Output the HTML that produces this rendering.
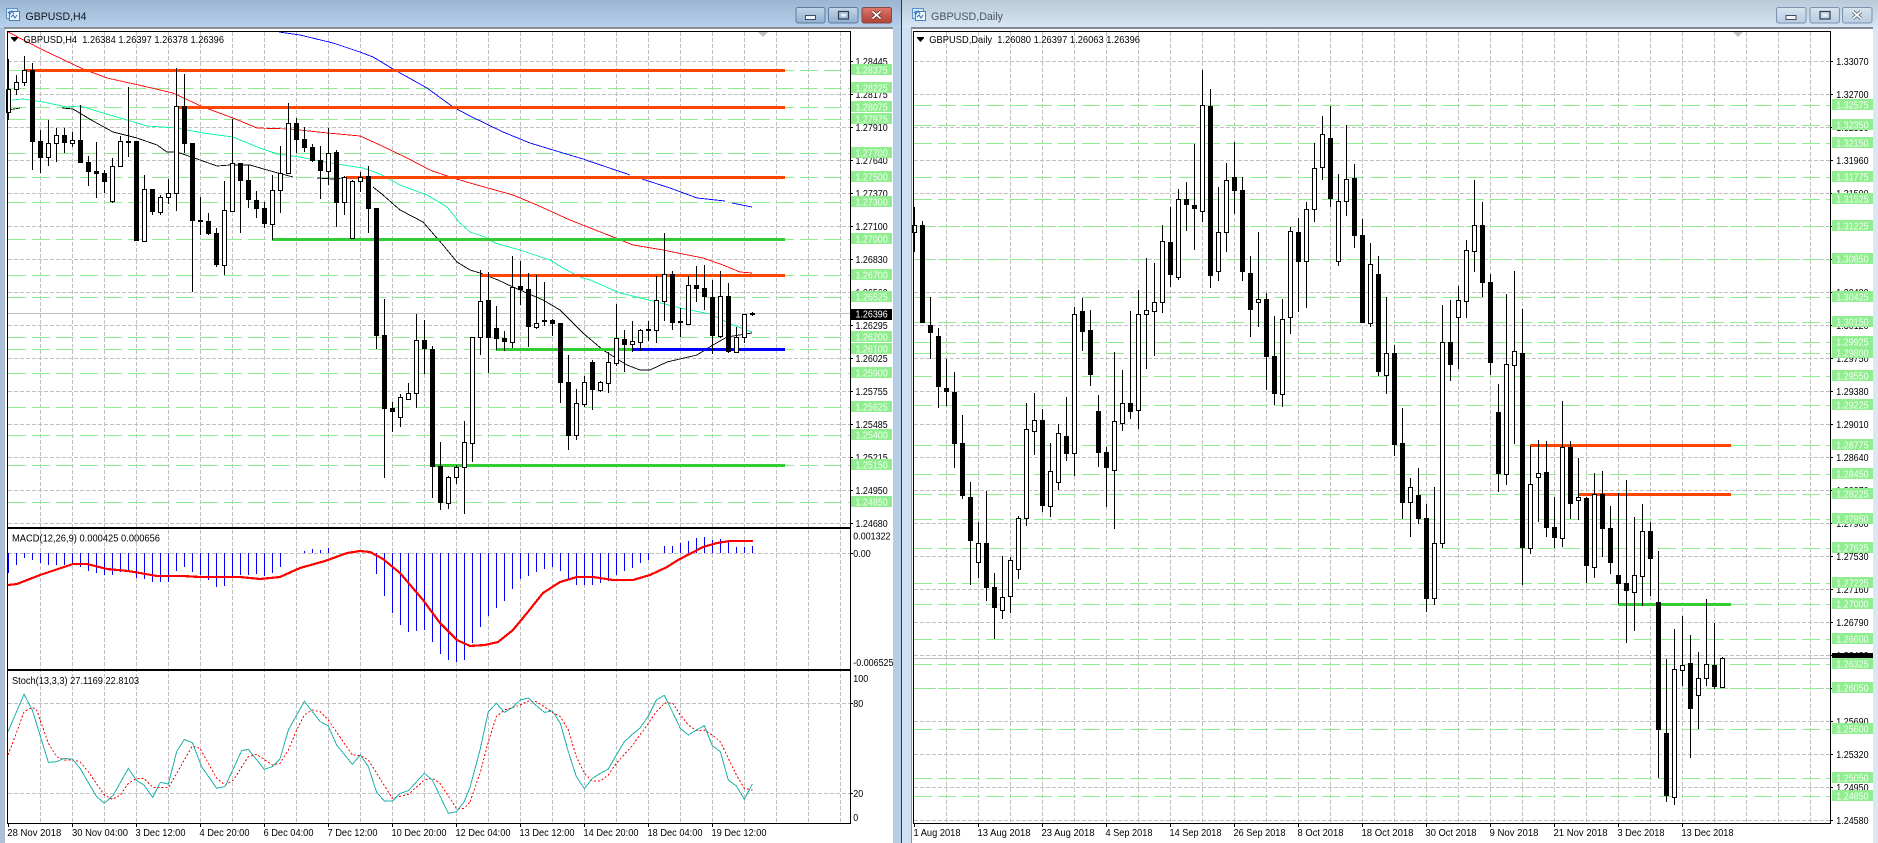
<!DOCTYPE html>
<html><head><meta charset="utf-8"><title>GBPUSD</title>
<style>
html,body{margin:0;padding:0;background:#fff;width:1878px;height:843px;overflow:hidden}
svg{display:block}
text{font-family:"Liberation Sans",sans-serif;font-size:10.5px;fill:#000;white-space:pre}
.c{shape-rendering:crispEdges;fill:none}
.lb text{fill:#f2fff2}
</style></head><body>
<svg width="1878" height="843" viewBox="0 0 1878 843" xmlns="http://www.w3.org/2000/svg">
<defs>
<linearGradient id="t1" x1="0" y1="0" x2="0" y2="1"><stop offset="0" stop-color="#9bb4d0"/><stop offset="1" stop-color="#b7d2ec"/></linearGradient>
<linearGradient id="t2" x1="0" y1="0" x2="0" y2="1"><stop offset="0" stop-color="#bac9d8"/><stop offset="1" stop-color="#d7e7f5"/></linearGradient>
<linearGradient id="b1" x1="0" y1="0" x2="0" y2="1"><stop offset="0" stop-color="#c3d6e9"/><stop offset=".5" stop-color="#a9c2dc"/><stop offset="1" stop-color="#8fb0d2"/></linearGradient>
<linearGradient id="b2" x1="0" y1="0" x2="0" y2="1"><stop offset="0" stop-color="#e0786c"/><stop offset=".5" stop-color="#c75a4e"/><stop offset="1" stop-color="#b04236"/></linearGradient>
<linearGradient id="b3" x1="0" y1="0" x2="0" y2="1"><stop offset="0" stop-color="#d9e5f0"/><stop offset=".5" stop-color="#c6d7e7"/><stop offset="1" stop-color="#b8cee3"/></linearGradient>
</defs>
<rect width="1878" height="843" fill="#fff"/>
<!-- window chrome -->
<rect x="0" y="28" width="4.5" height="815" fill="#a9c1dc"/>
<rect x="893" y="28" width="8" height="815" fill="#b5cfe9"/>
<rect x="902" y="28" width="9" height="815" fill="#d0e2f1"/>
<rect x="1873" y="28" width="5" height="815" fill="#dbe8f4"/>
<rect x="0" y="0" width="901" height="28" fill="url(#t1)"/>
<rect x="902" y="0" width="976" height="28" fill="url(#t2)"/>
<rect x="901" y="0" width="1" height="843" fill="#0f4656"/>
<rect x="4" y="27" width="889" height="2" fill="#8b9096"/>
<rect x="911" y="27" width="962" height="2" fill="#858a90"/>
<rect x="4" y="29" width="1" height="814" fill="#8b9096" opacity=".5"/>
<rect x="911" y="29" width="1" height="814" fill="#8f9296"/>
<!-- icons -->
<g id="ic"><rect x="6.5" y="8.5" width="11" height="10" fill="#d5e6f7" stroke="#5b93cf"/><rect x="9.5" y="11.5" width="10" height="9" fill="#eef6fd" stroke="#3f7fc4"/><path d="M8 12l2 2 2-3 2 3M11 17l2-2 2 3 2-3" fill="none" stroke="#2f6cb5"/></g>
<g transform="translate(906,0)"><rect x="6.5" y="8.5" width="11" height="10" fill="#d5e6f7" stroke="#5b93cf"/><rect x="9.5" y="11.5" width="10" height="9" fill="#eef6fd" stroke="#3f7fc4"/><path d="M8 12l2 2 2-3 2 3M11 17l2-2 2 3 2-3" fill="none" stroke="#2f6cb5"/></g>
<text x="25.5" y="20" textLength="61" lengthAdjust="spacingAndGlyphs" style="font-size:11px;fill:#10141a">GBPUSD,H4</text>
<text x="931" y="20" textLength="72" lengthAdjust="spacingAndGlyphs" style="font-size:11px;fill:#4c5560">GBPUSD,Daily</text>
<!-- buttons -->
<rect x="796" y="7.5" width="29" height="15.5" rx="2" fill="url(#b1)" stroke="#5f7c9c"/>
<rect x="828.5" y="7.5" width="29.5" height="15.5" rx="2" fill="url(#b1)" stroke="#5f7c9c"/>
<rect x="862" y="7.5" width="29.5" height="15.5" rx="2" fill="url(#b2)" stroke="#7c4a48"/>
<rect x="805.5" y="15.5" width="10" height="4" fill="#f2f6fa" stroke="#3e4e60"/>
<rect x="838.5" y="11.5" width="10" height="7.5" fill="none" stroke="#2f3e50" stroke-width="1.2"/><rect x="841" y="14" width="5" height="2.5" fill="#e6eef6"/>
<path d="M872.5 11.5l8 7M880.5 11.5l-8 7" stroke="#5a2a28" stroke-width="3.4"/><path d="M872.5 11.5l8 7M880.5 11.5l-8 7" stroke="#fff" stroke-width="1.8"/>
<rect x="1776.5" y="7.5" width="29.5" height="15.5" rx="2" fill="url(#b3)" stroke="#7d90ac"/>
<rect x="1810" y="7.5" width="29.5" height="15.5" rx="2" fill="url(#b3)" stroke="#7d90ac"/>
<rect x="1842.5" y="7.5" width="29.5" height="15.5" rx="2" fill="url(#b3)" stroke="#7d90ac"/>
<rect x="1786" y="15.5" width="10" height="4" fill="#f2f6fa" stroke="#3e4e60"/>
<rect x="1820" y="11.5" width="10" height="7.5" fill="none" stroke="#2f3e50" stroke-width="1.2"/><rect x="1822.5" y="14" width="5" height="2.5" fill="#e6eef6"/>
<path d="M1853 11.5l8 7M1861 11.5l-8 7" stroke="#566070" stroke-width="3.4"/><path d="M1853 11.5l8 7M1861 11.5l-8 7" stroke="#fff" stroke-width="1.8"/>

<!-- LEFT grid -->
<g class="c" stroke="#c0c0c0" stroke-dasharray="4 2">
<path d="M40.5 32V823M72.5 32V823M104.5 32V823M136.5 32V823M168.5 32V823M200.5 32V823M232.5 32V823M264.5 32V823M296.5 32V823M328.5 32V823M360.5 32V823M392.5 32V823M424.5 32V823M456.5 32V823M488.5 32V823M520.5 32V823M552.5 32V823M584.5 32V823M616.5 32V823M648.5 32V823M680.5 32V823M712.5 32V823M744.5 32V823M776.5 32V823M808.5 32V823M840.5 32V823"/>
<path d="M8 61.5H850M8 94.5H850M8 127.5H850M8 160.5H850M8 193.5H850M8 226.5H850M8 259.5H850M8 292.5H850M8 325.5H850M8 358.5H850M8 391.5H850M8 424.5H850M8 457.5H850M8 490.5H850M8 523.5H850M8 553.5H850M8 703.5H850M8 793.5H850"/>
</g>
<g class="c" stroke="#90ee90" stroke-dasharray="18 6">
<path d="M8 70.5H850M8 88.5H850M8 107.5H850M8 119.5H850M8 153.5H850M8 177.5H850M8 202.5H850M8 239.5H850M8 275.5H850M8 297.5H850M8 337.5H850M8 349.5H850M8 373.5H850M8 407.5H850M8 435.5H850M8 465.5H850M8 502.5H850"/>
</g>
<path class="c" stroke="#c0c0c0" d="M8 313.5H850"/>
<!-- MAs -->
<g class="c" stroke-width=".9">
<polyline stroke="#ff0000" points="8,32 43,50 83,69 107,78 143,86 173,93 203,107 233,118 257,128 290,129 328,133 360,136 380,145 407,158 430,170 450,177 470,183 513,195 537,205 570,220 613,237 633,245 663,250 703,258 723,265 740,272 752,273"/>
<polyline stroke="#00fa9a" points="12,100 23,99 43,102 67,107 80,106 103,113 127,120 147,126 177,128 203,133 233,137 257,147 277,154 300,157 320,161 343,165 363,168 380,174 400,185 427,195 447,207 460,223 470,232 485,237 495,243 520,250 550,260 563,268 580,277 590,280 620,293 657,302 680,308 710,314 733,325 752,332"/>
<polyline stroke="#000" points="8,110 20,108"/>
<polyline stroke="#000" points="62,108 73,109 93,121 113,132 137,138 157,145 167,152 177,152 200,160 217,166 230,165 250,165 267,170 293,177"/>
<polyline stroke="#000" points="317,178 333,179 353,177"/>
<polyline stroke="#000" points="373,187 383,195 400,210 423,222 443,245 457,262 470,270 480,273 498,280 513,287 543,300 560,310 583,333 603,350 627,365 640,370 650,370 667,362 697,355 713,345 727,337 752,333"/>
<polyline stroke="#0000ff" points="279,32 300,35 333,43 360,52 373,57 393,69 427,88 453,107 470,116 503,132 530,143 553,150 583,159 630,175"/>
<polyline stroke="#0000ff" points="642,179 670,188 697,198 725,201"/>
<polyline stroke="#0000ff" points="732,203 752,207"/>
</g>
<!-- thick levels left -->
<g class="c" stroke-width="3">
<path stroke="#ff4500" d="M25 70.5H785M178 107.5H785M346 177.5H785M480 275.5H785"/>
<path stroke="#32cd32" d="M272 239.5H785M496 349.5H632M435 465.5H785"/>
<path stroke="#0000ff" d="M632 349.5H785"/>
</g>
<!-- candles left -->
<path class="c" stroke="#000" d="M8.5 59V120M16.5 75V95M24.5 56V86M32.5 63V170M40.5 130V173M48.5 120V166M56.5 128V162M64.5 128V153M72.5 132V147M80.5 105V163M88.5 156V186M96.5 142V198M104.5 170V193M112.5 158V203M120.5 136V167M128.5 87V157M136.5 141V241M144.5 175V241M152.5 189V215M160.5 195V215M168.5 179V204M176.5 68V211M184.5 74V153M192.5 143V292M200.5 197V235M208.5 213V235M216.5 228V267M224.5 181V275M232.5 119V212M240.5 163V233M248.5 165V208M256.5 191V218M264.5 202V228M272.5 175V240M280.5 146V213M288.5 103V173M296.5 118V153M304.5 127V152M312.5 144V162M320.5 146V199M328.5 128V185M336.5 150V227M344.5 176V215M352.5 180V239M360.5 172V192M368.5 166V233M376.5 208V349M384.5 299V478M392.5 402V432M400.5 394V427M408.5 383V400M416.5 314V408M424.5 320V374M432.5 346V498M440.5 442V510M448.5 476V509M456.5 465V484M464.5 421V514M472.5 337V462M480.5 270V355M488.5 272V373M496.5 306V350M504.5 331V351M512.5 256V348M520.5 261V305M528.5 273V347M536.5 275V329M544.5 282V326M552.5 319V336M560.5 323V403M568.5 355V450M576.5 389V440M584.5 376V407M592.5 360V410M600.5 381V392M608.5 352V393M616.5 304V366M624.5 330V372M632.5 321V352M640.5 329V351M648.5 321V341M656.5 276V343M664.5 233V321M672.5 271V330M680.5 308V337M688.5 276V325M696.5 266V302M704.5 265V310M712.5 280V354M720.5 271V338M728.5 283V353M736.5 327V353M744.5 314V343M752.5 312V316"/>
<path class="c" style="fill:#fff" stroke="#000" d="M6.5 89.5h4V112.5h-4zM14.5 82.5h4V89.5h-4zM22.5 70.5h4V82.5h-4zM46.5 143.5h4V157.5h-4zM54.5 135.5h4V143.5h-4zM70.5 140.5h4V143.5h-4zM110.5 166.5h4V201.5h-4zM118.5 141.5h4V166.5h-4zM142.5 189.5h4V241.5h-4zM158.5 197.5h4V212.5h-4zM166.5 193.5h4V197.5h-4zM174.5 106.5h4V193.5h-4zM222.5 210.5h4V265.5h-4zM230.5 163.5h4V211.5h-4zM270.5 190.5h4V224.5h-4zM278.5 173.5h4V190.5h-4zM286.5 123.5h4V173.5h-4zM326.5 153.5h4V171.5h-4zM342.5 177.5h4V202.5h-4zM350.5 181.5h4V238.5h-4zM358.5 177.5h4V181.5h-4zM398.5 397.5h4V417.5h-4zM406.5 393.5h4V399.5h-4zM414.5 340.5h4V393.5h-4zM446.5 477.5h4V503.5h-4zM454.5 467.5h4V477.5h-4zM462.5 442.5h4V467.5h-4zM470.5 337.5h4V443.5h-4zM478.5 301.5h4V337.5h-4zM510.5 287.5h4V342.5h-4zM534.5 323.5h4V327.5h-4zM574.5 403.5h4V435.5h-4zM582.5 382.5h4V404.5h-4zM598.5 382.5h4V390.5h-4zM606.5 362.5h4V383.5h-4zM614.5 338.5h4V363.5h-4zM630.5 341.5h4V344.5h-4zM638.5 330.5h4V342.5h-4zM654.5 300.5h4V330.5h-4zM662.5 274.5h4V301.5h-4zM686.5 285.5h4V324.5h-4zM718.5 296.5h4V336.5h-4zM734.5 337.5h4V352.5h-4zM742.5 314.5h4V337.5h-4z"/>
<path class="c" stroke="#000" stroke-width="5" d="M32.5 70V142M40.5 141V158M64.5 135V143M80.5 140V163M88.5 162V172M96.5 171V174M104.5 173V182M128.5 141V143M136.5 141V241M152.5 189V212M184.5 106V144M192.5 143V221M200.5 220V222M208.5 221V234M216.5 233V265M240.5 163V181M248.5 180V200M256.5 200V209M264.5 208V224M296.5 123V140M304.5 139V148M312.5 147V161M320.5 160V171M336.5 152V203M368.5 176V209M376.5 208V336M384.5 335V409M392.5 408V412M424.5 340V349M432.5 349V467M440.5 466V503M488.5 300V338M496.5 328V339M504.5 338V342M520.5 286V290M528.5 289V327M544.5 320V322M552.5 320V324M560.5 323V383M568.5 382V436M592.5 362V390M624.5 339V345M648.5 329V331M672.5 274V323M680.5 321V323M696.5 285V289M704.5 288V297M712.5 297V336M728.5 296V352M752.5 313V315"/>
<!-- MACD hist -->
<path class="c" stroke="#0000ff" d="M8.5 553V573M16.5 553V565M24.5 553V558M32.5 553V560M40.5 553V563M48.5 553V565M56.5 553V565M64.5 553V565M72.5 553V565M80.5 553V567M88.5 553V571M96.5 553V573M104.5 553V575M112.5 553V575M120.5 553V572M128.5 553V570M136.5 553V578M144.5 553V579M152.5 553V582M160.5 553V582M168.5 553V582M176.5 553V571M184.5 553V567M192.5 553V572M200.5 553V575M208.5 553V580M216.5 553V587M224.5 553V586M232.5 553V577M240.5 553V575M248.5 553V575M256.5 553V574M264.5 553V576M272.5 553V573M280.5 553V567M304.5 553V551M312.5 553V549M320.5 553V550M328.5 553V548M376.5 553V574M384.5 553V596M392.5 553V613M400.5 553V625M408.5 553V632M416.5 553V631M424.5 553V630M432.5 553V642M440.5 553V654M448.5 553V660M456.5 553V662M464.5 553V660M472.5 553V643M480.5 553V627M488.5 553V616M496.5 553V608M504.5 553V601M512.5 553V589M520.5 553V579M528.5 553V576M536.5 553V572M544.5 553V569M552.5 553V567M560.5 553V571M568.5 553V580M576.5 553V585M584.5 553V585M592.5 553V585M600.5 553V583M608.5 553V581M616.5 553V575M624.5 553V571M632.5 553V568M640.5 553V563M648.5 553V560M664.5 553V546M672.5 553V546M680.5 553V543M688.5 553V541M696.5 553V538M704.5 553V537M712.5 553V540M720.5 553V539M728.5 553V542M736.5 553V547M744.5 553V547M752.5 553V546"/>
<polyline class="c" stroke="#ff0000" stroke-width="2.2" points="8,585 17,584 40,575 73,564 87,564 107,569 128,571 140,573 157,576 183,576 200,577 240,577 260,579 280,577 300,568 325,561 347,553 360,551 370,552 383,559 400,573 423,600 440,623 457,640 470,646 485,645 498,642 513,630 527,613 543,593 560,582 577,577 593,577 613,580 633,580 650,575 667,567 678,560 703,547 717,543 730,541 753,541"/>
<!-- Stoch -->
<g class="c" transform="translate(0,560) scale(.33333)" stroke-width="3">
<polyline stroke="#ff0000" stroke-dasharray="6 6" points="24,585 60,490 72,455 97,442 110,450 145,550 170,590 193,600 218,600 240,605 265,635 313,705 337,718 361,705 385,670 410,655 432,655 458,682 505,683 530,640 577,558 600,565 625,610 650,655 675,675 700,660 745,590 770,583 817,615 840,610 865,570 890,510 913,465 937,450 961,455 985,480 1033,550 1057,585 1081,587 1105,600 1130,640 1177,715 1225,703 1273,660 1297,655 1320,670 1369,745 1393,745 1410,725"/>
<polyline stroke="#20b2aa" points="24,515 72,403 97,450 145,607 170,605 193,595 218,598 240,625 290,710 313,730 340,705 385,625 410,662 432,675 458,712 481,667 505,672 530,575 553,538 577,548 605,620 650,685 675,680 725,572 745,568 793,628 817,620 840,597 865,510 913,424 937,455 961,485 985,498 1010,555 1057,613 1081,585 1105,620 1130,697 1153,723 1177,723 1201,700 1225,692 1273,640 1297,660 1345,760 1369,755 1393,725 1410,682"/>
</g>
<g class="c" transform="translate(470,560) scale(.33333)" stroke-width="3">
<polyline stroke="#ff0000" stroke-dasharray="6 6" points="0,725 30,640 55,545 79,470 103,450 127,443 151,435 175,423 199,425 223,440 247,457 271,470 295,510 319,590 343,640 367,663 391,663 415,645 439,610 487,557 535,490 559,455 583,430 607,428 631,465 655,495 679,512 703,510 727,525 751,545 775,595 799,645 823,685 847,690"/>
<polyline stroke="#20b2aa" points="0,682 30,570 55,455 79,430 103,457 127,443 151,420 175,414 199,437 223,457 247,453 271,490 295,575 319,650 343,686 367,655 391,640 415,627 439,585 463,545 487,523 511,503 535,468 559,420 583,406 607,455 631,505 655,525 679,510 703,497 727,557 751,575 775,660 799,678 823,718 847,672"/>
</g>
<!-- LEFT frame -->
<path class="c" stroke="#000" d="M7.5 31V824M850.5 31V824M7 31.5H851M7 528.5H851M7 527.5H851M7 669.5H851M7 670.5H851M7 823.5H851"/>
<path class="c" stroke="#000" d="M850 61.5h3M850 94.5h3M850 127.5h3M850 160.5h3M850 193.5h3M850 226.5h3M850 259.5h3M850 292.5h3M850 325.5h3M850 358.5h3M850 391.5h3M850 424.5h3M850 457.5h3M850 490.5h3M850 523.5h3M850 553.5h3M850 703.5h3M850 793.5h3M8.5 824v3M72.5 824v3M136.5 824v3M200.5 824v3M264.5 824v3M328.5 824v3M392.5 824v3M456.5 824v3M520.5 824v3M584.5 824v3M648.5 824v3M712.5 824v3"/>
<path d="M758 32h10l-5 5z" fill="#c0c0c0"/>
<path d="M11 38h7l-3.5 4z" fill="#000"/><rect x="11" y="37" width="7" height="1" fill="#000"/>
<text x="23.5" y="43" textLength="200.5" lengthAdjust="spacingAndGlyphs">GBPUSD,H4  1.26384 1.26397 1.26378 1.26396</text>
<text x="12" y="541.5" textLength="148" lengthAdjust="spacingAndGlyphs">MACD(12,26,9) 0.000425 0.000656</text>
<text x="12" y="684" textLength="127" lengthAdjust="spacingAndGlyphs">Stoch(13,3,3) 27.1169 22.8103</text>
<!-- LEFT axis labels -->
<g transform="translate(855.5,0) scale(.85,1)">
<text y="65">1.28445</text><text y="98">1.28175</text><text y="131">1.27910</text><text y="164">1.27640</text><text y="197">1.27370</text><text y="230">1.27100</text><text y="263">1.26830</text><text y="296">1.26560</text><text y="329">1.26295</text><text y="362">1.26025</text><text y="395">1.25755</text><text y="428">1.25485</text><text y="461">1.25215</text><text y="494">1.24950</text><text y="527">1.24680</text>
</g>
<g transform="translate(853.3,0) scale(.85,1)">
<text y="539.5">0.001322</text><text y="557">0.00</text><text y="666">-0.006525</text><text y="682">100</text><text y="707">80</text><text y="797">20</text><text y="821">0</text>
</g>
<rect x="893" y="655" width="8" height="14" fill="#b5cfe9"/>
<rect x="851" y="309" width="41" height="11" fill="#000"/>
<path fill="#90ee90" d="M851 64h41v11h-41zM851 82h41v11h-41zM851 101h41v11h-41zM851 113h41v11h-41zM851 147h41v11h-41zM851 171h41v11h-41zM851 196h41v11h-41zM851 233h41v11h-41zM851 269h41v11h-41zM851 291h41v11h-41zM851 331h41v11h-41zM851 343h41v11h-41zM851 367h41v11h-41zM851 401h41v11h-41zM851 429h41v11h-41zM851 459h41v11h-41zM851 496h41v11h-41z"/>
<g class="lb" transform="translate(855.5,0) scale(.85,1)">
<text y="73.5">1.28375</text><text y="91.5">1.28225</text><text y="110.5">1.28075</text><text y="122.5">1.27975</text><text y="156.5">1.27700</text><text y="180.5">1.27500</text><text y="205.5">1.27300</text><text y="242.5">1.27000</text><text y="278.5">1.26700</text><text y="300.5">1.26525</text><text y="340.5">1.26200</text><text y="352.5">1.26100</text><text y="376.5">1.25900</text><text y="410.5">1.25625</text><text y="438.5">1.25400</text><text y="468.5">1.25150</text><text y="505.5">1.24850</text>
<text y="317.5" style="fill:#fff">1.26396</text>
</g>
<!-- LEFT time labels -->
<g>
<text x="7.3" y="836" textLength="54" lengthAdjust="spacingAndGlyphs">28 Nov 2018</text>
<text x="72" y="836" textLength="56" lengthAdjust="spacingAndGlyphs">30 Nov 04:00</text>
<text x="135.5" y="836" textLength="50" lengthAdjust="spacingAndGlyphs">3 Dec 12:00</text>
<text x="199.5" y="836" textLength="50" lengthAdjust="spacingAndGlyphs">4 Dec 20:00</text>
<text x="263.5" y="836" textLength="50" lengthAdjust="spacingAndGlyphs">6 Dec 04:00</text>
<text x="327.5" y="836" textLength="50" lengthAdjust="spacingAndGlyphs">7 Dec 12:00</text>
<text x="391.5" y="836" textLength="55" lengthAdjust="spacingAndGlyphs">10 Dec 20:00</text>
<text x="455.5" y="836" textLength="55" lengthAdjust="spacingAndGlyphs">12 Dec 04:00</text>
<text x="519.5" y="836" textLength="55" lengthAdjust="spacingAndGlyphs">13 Dec 12:00</text>
<text x="583.5" y="836" textLength="55" lengthAdjust="spacingAndGlyphs">14 Dec 20:00</text>
<text x="647.5" y="836" textLength="55" lengthAdjust="spacingAndGlyphs">18 Dec 04:00</text>
<text x="711.5" y="836" textLength="55" lengthAdjust="spacingAndGlyphs">19 Dec 12:00</text>
</g>

<!-- RIGHT grid -->
<g class="c" stroke="#c0c0c0" stroke-dasharray="4 2">
<path d="M946.5 32V823M978.5 32V823M1010.5 32V823M1042.5 32V823M1074.5 32V823M1106.5 32V823M1138.5 32V823M1170.5 32V823M1202.5 32V823M1234.5 32V823M1266.5 32V823M1298.5 32V823M1330.5 32V823M1362.5 32V823M1394.5 32V823M1426.5 32V823M1458.5 32V823M1490.5 32V823M1522.5 32V823M1554.5 32V823M1586.5 32V823M1618.5 32V823M1650.5 32V823M1682.5 32V823M1714.5 32V823M1746.5 32V823M1778.5 32V823M1810.5 32V823"/>
<path d="M914 61.5H1830M914 94.5H1830M914 127.5H1830M914 160.5H1830M914 193.5H1830M914 226.5H1830M914 259.5H1830M914 292.5H1830M914 325.5H1830M914 358.5H1830M914 391.5H1830M914 424.5H1830M914 457.5H1830M914 490.5H1830M914 523.5H1830M914 556.5H1830M914 589.5H1830M914 622.5H1830M914 655.5H1830M914 688.5H1830M914 721.5H1830M914 754.5H1830M914 787.5H1830M914 820.5H1830"/>
</g>
<g class="c" stroke="#90ee90" stroke-dasharray="18 6">
<path d="M914 105.5H1830M914 125.5H1830M914 143.5H1830M914 177.5H1830M914 199.5H1830M914 226.5H1830M914 259.5H1830M914 297.5H1830M914 322.5H1830M914 342.5H1830M914 353.5H1830M914 376.5H1830M914 405.5H1830M914 445.5H1830M914 474.5H1830M914 494.5H1830M914 519.5H1830M914 548.5H1830M914 583.5H1830M914 604.5H1830M914 639.5H1830M914 664.5H1830M914 688.5H1830M914 729.5H1830M914 778.5H1830M914 796.5H1830"/>
</g>
<path class="c" stroke="#c0c0c0" d="M914 658.5H1830"/>
<g class="c" stroke-width="3">
<path stroke="#ff4500" d="M1530 445.5H1731M1579 494.5H1731"/>
<path stroke="#32cd32" d="M1618 604.5H1731"/>
</g>
<!-- candles right -->
<path class="c" stroke="#000" d="M914.5 207V252M922.5 221V323M930.5 297V359M938.5 328V408M946.5 359V406M954.5 372V468M962.5 415V499M970.5 482V585M978.5 522V578M986.5 491V601M994.5 573V639M1002.5 556V619M1010.5 557V613M1018.5 516V579M1026.5 403V526M1034.5 393V455M1042.5 409V512M1050.5 443V517M1058.5 424V490M1066.5 397V461M1074.5 307V476M1082.5 298V351M1090.5 310V386M1098.5 395V467M1106.5 447V507M1114.5 352V529M1122.5 370V431M1130.5 311V419M1138.5 290V429M1146.5 258V369M1154.5 263V356M1162.5 225V313M1170.5 207V287M1178.5 189V280M1186.5 182V231M1194.5 144V250M1202.5 70V222M1210.5 89V288M1218.5 187V281M1226.5 163V252M1234.5 142V214M1242.5 177V281M1250.5 256V337M1258.5 232V327M1266.5 293V390M1274.5 316V405M1282.5 299V407M1290.5 227V334M1298.5 218V312M1306.5 202V308M1314.5 143V222M1322.5 116V180M1330.5 106V207M1338.5 174V266M1346.5 125V216M1354.5 164V248M1362.5 219V323M1370.5 243V327M1378.5 256V376M1386.5 297V394M1394.5 345V456M1402.5 408V519M1410.5 478V537M1418.5 468V524M1426.5 504V612M1434.5 487V605M1442.5 305V548M1450.5 300V381M1458.5 286V369M1466.5 240V318M1474.5 180V272M1482.5 202V297M1490.5 274V375M1498.5 384V492M1506.5 294V485M1514.5 271V444M1522.5 309V585M1530.5 446V554M1538.5 440V522M1546.5 441V537M1554.5 497V548M1562.5 401V547M1570.5 441V519M1578.5 458V520M1586.5 497V583M1594.5 473V578M1602.5 471V557M1610.5 506V574M1618.5 493V604M1626.5 480V643M1634.5 517V631M1642.5 504V606M1650.5 522V596M1658.5 551V778M1666.5 659V802M1674.5 629V805M1682.5 616V686M1690.5 635V758M1698.5 652V729M1706.5 599V686M1714.5 623V689M1722.5 657V688"/>
<path class="c" style="fill:#fff" stroke="#000" d="M912.5 225.5h4V232.5h-4zM976.5 543.5h4V562.5h-4zM1000.5 597.5h4V610.5h-4zM1008.5 560.5h4V596.5h-4zM1016.5 518.5h4V569.5h-4zM1024.5 429.5h4V518.5h-4zM1032.5 420.5h4V431.5h-4zM1048.5 471.5h4V506.5h-4zM1056.5 433.5h4V482.5h-4zM1072.5 314.5h4V453.5h-4zM1112.5 421.5h4V470.5h-4zM1120.5 403.5h4V423.5h-4zM1136.5 314.5h4V410.5h-4zM1144.5 310.5h4V314.5h-4zM1152.5 302.5h4V311.5h-4zM1160.5 241.5h4V302.5h-4zM1176.5 199.5h4V277.5h-4zM1200.5 105.5h4V211.5h-4zM1216.5 232.5h4V271.5h-4zM1224.5 180.5h4V232.5h-4zM1256.5 299.5h4V302.5h-4zM1280.5 319.5h4V394.5h-4zM1288.5 231.5h4V317.5h-4zM1304.5 209.5h4V261.5h-4zM1312.5 168.5h4V209.5h-4zM1320.5 134.5h4V167.5h-4zM1336.5 201.5h4V261.5h-4zM1344.5 179.5h4V201.5h-4zM1368.5 264.5h4V323.5h-4zM1384.5 353.5h4V375.5h-4zM1408.5 487.5h4V502.5h-4zM1432.5 543.5h4V598.5h-4zM1440.5 342.5h4V543.5h-4zM1456.5 300.5h4V317.5h-4zM1464.5 250.5h4V301.5h-4zM1472.5 225.5h4V251.5h-4zM1504.5 364.5h4V474.5h-4zM1512.5 351.5h4V365.5h-4zM1528.5 484.5h4V548.5h-4zM1536.5 473.5h4V477.5h-4zM1560.5 447.5h4V538.5h-4zM1576.5 497.5h4V500.5h-4zM1592.5 494.5h4V567.5h-4zM1632.5 575.5h4V592.5h-4zM1640.5 531.5h4V576.5h-4zM1672.5 669.5h4V797.5h-4zM1680.5 665.5h4V670.5h-4zM1696.5 678.5h4V695.5h-4zM1704.5 664.5h4V678.5h-4zM1720.5 658.5h4V687.5h-4z"/>
<path class="c" stroke="#000" stroke-width="5" d="M922.5 225V323M930.5 325V333M938.5 336V387M946.5 388V392M954.5 392V444M962.5 443V496M970.5 497V541M986.5 543V588M994.5 587V608M1042.5 420V506M1066.5 436V454M1082.5 311V332M1090.5 330V375M1098.5 411V453M1106.5 452V468M1130.5 403V412M1170.5 242V275M1186.5 199V205M1194.5 205V209M1210.5 106V276M1234.5 177V191M1242.5 190V272M1250.5 273V310M1266.5 299V357M1274.5 356V394M1298.5 232V262M1330.5 138V199M1354.5 178V236M1362.5 235V323M1378.5 274V372M1394.5 353V445M1402.5 443V503M1418.5 495V519M1426.5 518V599M1450.5 342V365M1482.5 225V283M1490.5 282V363M1498.5 412V474M1522.5 353V548M1546.5 472V528M1554.5 527V538M1570.5 447V504M1586.5 498V566M1602.5 494V529M1610.5 528V563M1618.5 575V584M1626.5 583V591M1650.5 531V559M1658.5 602V730M1666.5 733V796M1690.5 663V709M1714.5 665V687"/>
<!-- RIGHT frame -->
<path class="c" stroke="#000" d="M913.5 31V824M1830.5 31V824M913 31.5H1831M913 823.5H1831"/>
<path class="c" stroke="#000" d="M1830 61.5h3M1830 94.5h3M1830 127.5h3M1830 160.5h3M1830 193.5h3M1830 226.5h3M1830 259.5h3M1830 292.5h3M1830 325.5h3M1830 358.5h3M1830 391.5h3M1830 424.5h3M1830 457.5h3M1830 490.5h3M1830 523.5h3M1830 556.5h3M1830 589.5h3M1830 622.5h3M1830 655.5h3M1830 688.5h3M1830 721.5h3M1830 754.5h3M1830 787.5h3M1830 820.5h3M914.5 824v3M978.5 824v3M1042.5 824v3M1106.5 824v3M1170.5 824v3M1234.5 824v3M1298.5 824v3M1362.5 824v3M1426.5 824v3M1490.5 824v3M1554.5 824v3M1618.5 824v3M1682.5 824v3"/>
<path d="M1733 32h10l-5 5z" fill="#c0c0c0"/>
<path d="M917 38h7l-3.5 4z" fill="#000"/><rect x="917" y="37" width="7" height="1" fill="#000"/>
<text x="929.3" y="43" textLength="210.7" lengthAdjust="spacingAndGlyphs">GBPUSD,Daily  1.26080 1.26397 1.26063 1.26396</text>
<g transform="translate(1836.3,0) scale(.85,1)">
<text y="65">1.33070</text><text y="98">1.32700</text><text y="131">1.32330</text><text y="164">1.31960</text><text y="197">1.31590</text><text y="230">1.31220</text><text y="263">1.30850</text><text y="296">1.30480</text><text y="329">1.30120</text><text y="362">1.29750</text><text y="395">1.29380</text><text y="428">1.29010</text><text y="461">1.28640</text><text y="494">1.28270</text><text y="527">1.27900</text><text y="560">1.27530</text><text y="593">1.27160</text><text y="626">1.26790</text><text y="659">1.26420</text><text y="692">1.26050</text><text y="725">1.25690</text><text y="758">1.25320</text><text y="791">1.24950</text><text y="824">1.24580</text>
</g>
<rect x="1832" y="653" width="41" height="11" fill="#000"/>
<path fill="#90ee90" d="M1832 99h41v11h-41zM1832 119h41v11h-41zM1832 137h41v11h-41zM1832 171h41v11h-41zM1832 193h41v11h-41zM1832 220h41v11h-41zM1832 253h41v11h-41zM1832 291h41v11h-41zM1832 316h41v11h-41zM1832 336h41v11h-41zM1832 347h41v11h-41zM1832 370h41v11h-41zM1832 399h41v11h-41zM1832 439h41v11h-41zM1832 468h41v11h-41zM1832 488h41v11h-41zM1832 513h41v11h-41zM1832 542h41v11h-41zM1832 577h41v11h-41zM1832 598h41v11h-41zM1832 633h41v11h-41zM1832 658h41v11h-41zM1832 682h41v11h-41zM1832 723h41v11h-41zM1832 772h41v11h-41zM1832 790h41v11h-41z"/>
<g class="lb" transform="translate(1836.3,0) scale(.85,1)">
<text y="108.5">1.32575</text><text y="128.5">1.32350</text><text y="146.5">1.32150</text><text y="180.5">1.31775</text><text y="202.5">1.31525</text><text y="229.5">1.31225</text><text y="262.5">1.30850</text><text y="300.5">1.30425</text><text y="325.5">1.30150</text><text y="345.5">1.29925</text><text y="356.5">1.29800</text><text y="379.5">1.29550</text><text y="408.5">1.29225</text><text y="448.5">1.28775</text><text y="477.5">1.28450</text><text y="497.5">1.28225</text><text y="522.5">1.27950</text><text y="551.5">1.27625</text><text y="586.5">1.27225</text><text y="607.5">1.27000</text><text y="642.5">1.26600</text><text y="667.5">1.26325</text><text y="691.5">1.26050</text><text y="732.5">1.25600</text><text y="781.5">1.25050</text><text y="799.5">1.24850</text>
</g>
<g>
<text x="913.5" y="836" textLength="47" lengthAdjust="spacingAndGlyphs">1 Aug 2018</text>
<text x="977.5" y="836" textLength="53" lengthAdjust="spacingAndGlyphs">13 Aug 2018</text>
<text x="1041.5" y="836" textLength="53" lengthAdjust="spacingAndGlyphs">23 Aug 2018</text>
<text x="1105.5" y="836" textLength="47" lengthAdjust="spacingAndGlyphs">4 Sep 2018</text>
<text x="1169.5" y="836" textLength="52" lengthAdjust="spacingAndGlyphs">14 Sep 2018</text>
<text x="1233.5" y="836" textLength="52" lengthAdjust="spacingAndGlyphs">26 Sep 2018</text>
<text x="1297.5" y="836" textLength="46" lengthAdjust="spacingAndGlyphs">8 Oct 2018</text>
<text x="1361.5" y="836" textLength="52" lengthAdjust="spacingAndGlyphs">18 Oct 2018</text>
<text x="1425.5" y="836" textLength="51" lengthAdjust="spacingAndGlyphs">30 Oct 2018</text>
<text x="1489.5" y="836" textLength="49" lengthAdjust="spacingAndGlyphs">9 Nov 2018</text>
<text x="1553.5" y="836" textLength="54" lengthAdjust="spacingAndGlyphs">21 Nov 2018</text>
<text x="1617.5" y="836" textLength="47" lengthAdjust="spacingAndGlyphs">3 Dec 2018</text>
<text x="1681.5" y="836" textLength="52" lengthAdjust="spacingAndGlyphs">13 Dec 2018</text>
</g>
</svg>
</body></html>
